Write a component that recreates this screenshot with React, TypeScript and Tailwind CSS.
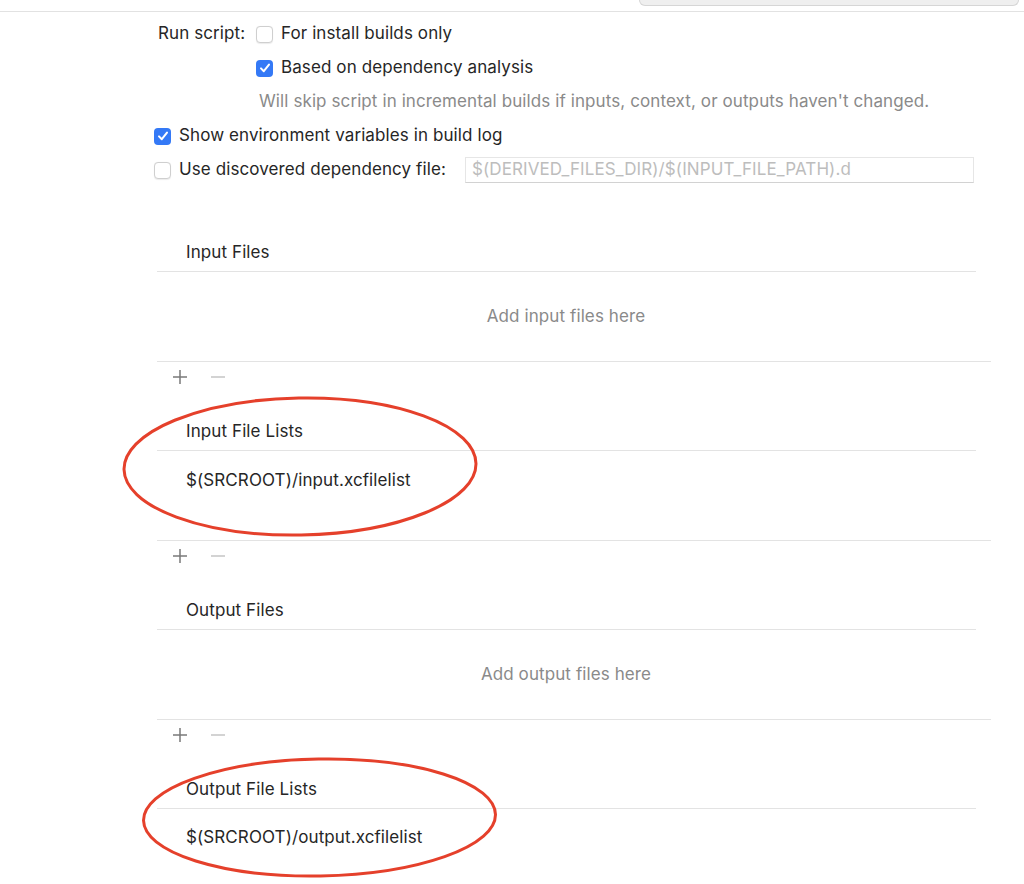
import { ReactNode } from 'react';

const font = { fontFamily: 'Inter, "Liberation Sans", sans-serif' };

export default function App() {
  return (
    <div className="relative w-[1024px] h-[884px] overflow-hidden bg-white text-[17px] tracking-[0.1px] text-[#262626]" style={font}>
      {/* 상단 툴바 끝부분 */}
      <div className="h-[12px] border-b border-[#e2e2e2] flex justify-end pr-[5px]">
        <div className="w-[380px] h-[6px] bg-[#efefef] border border-t-0 border-[#d6d6d6] rounded-b-[7px]" />
      </div>

      {/* 스크립트 옵션 */}
      <div className="pt-[5px] flex flex-col">
        <div className="h-[34px] flex items-center pl-[158px]">
          <span className="w-[98px]">Run script:</span>
          <Check label="For install builds only" />
        </div>
        <div className="h-[34px] flex items-center pl-[256px]">
          <Check checked label="Based on dependency analysis" />
        </div>
        <div className="h-[34px] flex items-center pl-[259px] text-[#8a8a8a]">
          Will skip script in incremental builds if inputs, context, or outputs haven't changed.
        </div>
        <div className="h-[34px] flex items-center pl-[154px]">
          <Check checked label="Show environment variables in build log" />
        </div>
        <div className="h-[34px] flex items-center pl-[154px] w-[974px]">
          <Check label="Use discovered dependency file:" />
          <div className="ml-auto w-[509px] h-[26px] flex items-center px-[6px] border border-[#e6e6e6] border-b-[#d2d2d2] text-[#bdbdbd]">
            $(DERIVED_FILES_DIR)/$(INPUT_FILE_PATH).d
          </div>
        </div>
      </div>

      {/* 파일 목록 */}
      <div className="mt-[44px] pl-[157px] flex flex-col">
        <FileSection title="Input Files">
          <p className="h-full flex items-center justify-center text-[#8a8a8a] pr-[16px]">Add input files here</p>
        </FileSection>
        <FileSection title="Input File Lists">
          <p className="pt-[17px] pl-[29px] leading-[24px]">$(SRCROOT)/input.xcfilelist</p>
        </FileSection>
        <FileSection title="Output Files">
          <p className="h-full flex items-center justify-center text-[#8a8a8a] pr-[16px]">Add output files here</p>
        </FileSection>
        <div className="h-[41px] w-[819px] pt-[3px] border-b border-[#e3e3e3] flex items-center pl-[29px]">Output File Lists</div>
        <p className="pt-[16px] pl-[29px] leading-[24px]">$(SRCROOT)/output.xcfilelist</p>
      </div>

      {/* 빨간 동그라미 */}
      <svg className="absolute inset-0 pointer-events-none" width="1024" height="884">
        <ellipse cx="300" cy="466.5" rx="176" ry="68.5" fill="none" stroke="#e5402b" strokeWidth="3" transform="rotate(-1 300 466.5)" />
        <ellipse cx="319.5" cy="817.5" rx="176" ry="58.5" fill="none" stroke="#e5402b" strokeWidth="3" transform="rotate(-1 319.5 817.5)" />
      </svg>
    </div>
  );
}

function Check({ checked = false, label }: { checked?: boolean; label: string }) {
  return (
    <div className="flex items-center gap-[8px]">
      {checked ? (
        <div className="w-[17px] h-[17px] rounded-[4px] bg-[#3479f6] flex items-center justify-center">
          <svg width="12" height="12" viewBox="0 0 12 12">
            <path d="M2 6.4 L4.8 9.2 L10 2.6" fill="none" stroke="white" strokeWidth="2" strokeLinecap="round" strokeLinejoin="round" />
          </svg>
        </div>
      ) : (
        <div className="w-[17px] h-[17px] rounded-[4px] border border-[#cfcfcf] bg-white shadow-[0_0.5px_1px_rgba(0,0,0,0.08)]" />
      )}
      <span>{label}</span>
    </div>
  );
}

function FileSection({ title, children }: { title: string; children: ReactNode }) {
  return (
    <div className="flex flex-col mb-[18px]">
      <div className="h-[41px] w-[819px] pt-[3px] border-b border-[#e3e3e3] flex items-center pl-[29px]">{title}</div>
      <div className="h-[90px] w-[834px] border-b border-[#e3e3e3]">{children}</div>
      <div className="h-[30px] flex items-center gap-[22px] pl-[15px]">
        <svg width="16" height="16" viewBox="0 0 16 16">
          <path d="M8 1 V15 M1 8 H15" stroke="#7a7a7a" strokeWidth="1.5" />
        </svg>
        <svg width="16" height="16" viewBox="0 0 16 16">
          <path d="M1 8 H15" stroke="#c4c4c4" strokeWidth="1.5" />
        </svg>
      </div>
    </div>
  );
}
